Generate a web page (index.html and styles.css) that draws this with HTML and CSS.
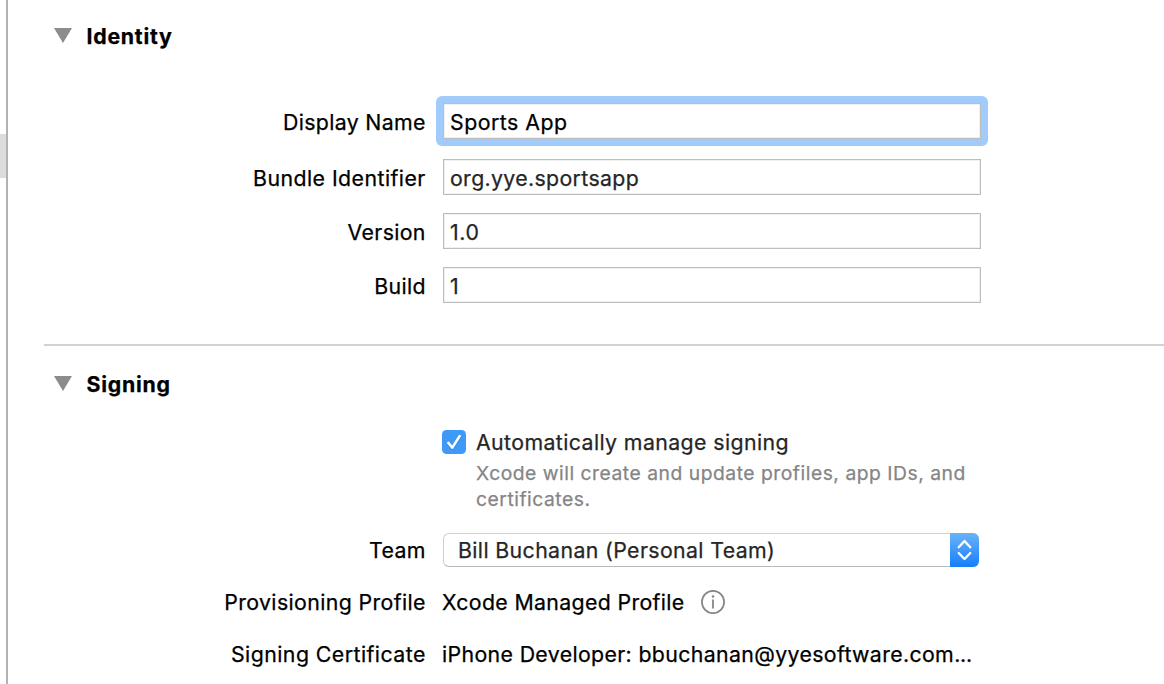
FILE: index.html
```html
<!DOCTYPE html>
<html lang="en">
<head>
<meta charset="utf-8">
<title>Target Settings</title>
<link rel="stylesheet" href="styles.css">
</head>
<body>
<div class="window">
  <aside class="rail"><div class="rail-selection"></div></aside>
  <main class="editor">
    <section class="section identity">
      <h2 class="heading"><svg class="disclosure" width="18" height="15" viewBox="0 0 18 15"><path d="M0 0H18L9 15Z" fill="#8c8c8c"/></svg><span>Identity</span></h2>
      <div class="fields">
        <div class="row first"><span class="label">Display Name</span><div class="focus-ring"><div class="field focused"><span class="v-name">Sports App</span></div></div></div>
        <div class="row"><span class="label l-wide">Bundle Identifier</span><div class="field"><span class="v-bundle">org.yye.sportsapp</span></div></div>
        <div class="row"><span class="label">Version</span><div class="field"><span class="v-version">1.0</span></div></div>
        <div class="row"><span class="label">Build</span><div class="field"><span class="v-version">1</span></div></div>
      </div>
    </section>
    <section class="section signing">
      <h2 class="heading"><svg class="disclosure" width="18" height="15" viewBox="0 0 18 15"><path d="M0 0H18L9 15Z" fill="#8c8c8c"/></svg><span>Signing</span></h2>
      <div class="auto">
        <svg class="checkbox" width="24" height="24" viewBox="0 0 24 24">
          <rect width="24" height="24" rx="4.5" fill="#3f99f7"/>
          <path d="M6.5 14L10.5 18.8L18 6.8" fill="none" stroke="#2274cf" stroke-opacity=".6" stroke-width="2.4" stroke-linecap="round" stroke-linejoin="round"/>
          <path d="M6.3 12.9L10.4 17.7L17.7 6" fill="none" stroke="#fff" stroke-width="2.5" stroke-linecap="round" stroke-linejoin="round"/>
        </svg>
        <div class="auto-copy">
          <div class="auto-title">Automatically manage signing</div>
          <div class="hint">Xcode will create and update profiles, app IDs, and<br>certificates.</div>
        </div>
      </div>
      <div class="details">
        <div class="row"><span class="label">Team</span>
          <div class="popup"><span class="v-team">Bill Buchanan (Personal Team)</span>
            <span class="stepper"><svg width="29" height="34" viewBox="0 0 29 34"><path d="M8.7 14.2L14.5 8L20.3 14.2M8.7 20L14.5 26L20.3 20" fill="none" stroke="#fff" stroke-width="2.3" stroke-linecap="round" stroke-linejoin="round"/></svg></span>
          </div>
        </div>
        <div class="row"><span class="label l-profile">Provisioning Profile</span><div class="value"><span class="v-profile">Xcode Managed Profile</span>
          <svg class="info" width="24" height="24" viewBox="0 0 24 24"><circle cx="12" cy="12" r="11.1" fill="none" stroke="#858585" stroke-width="1.7"/><path d="M12 9.5V18.5" stroke="#858585" stroke-width="1.8"/><circle cx="12" cy="6.6" r="1.25" fill="#858585"/></svg></div></div>
        <div class="row"><span class="label l-wide">Signing Certificate</span><div class="value"><span class="v-cert">iPhone Developer: bbuchanan@yyesoftware.com<span class="dots">...</span></span></div></div>
      </div>
    </section>
  </main>
</div>
</body>
</html>
```
FILE: styles.css
```css
* { box-sizing: border-box; }
body {
  margin: 0;
  background: #fff;
  color: #000;
  font: 400 21.3px/28px Inter, "Liberation Sans", sans-serif;
  letter-spacing: .3px;
  -webkit-text-stroke: .25px currentColor;
  white-space: nowrap;
}
.window { display: flex; width: 1164px; height: 684px; overflow: hidden; }
.rail { width: 8px; padding-top: 134px; border-right: 2px solid #b2b2b2; }
.rail-selection { height: 44px; background: #dcdcdc; }
.editor { flex: 1; padding-left: 36px; }
.heading {
  display: flex;
  align-items: center;
  gap: 14.5px;
  height: 28px;
  margin: 0;
  padding-left: 10px;
  font-size: 21.3px;
  font-weight: 700;
  letter-spacing: .75px;
}
.disclosure { position: relative; top: -1px; }
.identity { height: 344px; padding-top: 22px; }
.fields { display: grid; gap: 18px; padding-top: 53px; }
.row { display: grid; grid-template-columns: 381px 538px; column-gap: 18px; align-items: center; }
.first { margin-bottom: 2px; }
.label { justify-self: end; margin-right: -.8px; padding-top: 2px; letter-spacing: .34px; }
.l-profile { letter-spacing: .38px; }
.l-wide { letter-spacing: .45px; }
.field {
  height: 36px;
  padding: 4px 6px 0;
  border: 1px solid #bdbdbd;
  box-shadow: inset 0 0 0 1px #f0f0f0;
  background: #fff;
  color: #262626;
}
.focus-ring { margin: -7px; padding: 7px; border-radius: 6px; background: #a1cbfa; }
.focused { color: #000; }
.v-name { letter-spacing: .5px; }
.v-bundle { letter-spacing: .35px; }
.v-version { letter-spacing: .6px; }
.signing { border-top: 2px solid #d2d2d2; padding-top: 24px; }
.auto { display: flex; gap: 10px; padding: 32px 0 0 398px; }
.checkbox { flex: none; }
.auto-title { height: 30px; line-height: 24px; color: #262626; letter-spacing: .4px; }
.hint { font-size: 19.3px; line-height: 26px; color: #858585; letter-spacing: .52px; }
.details { display: grid; grid-auto-rows: 52px; padding-top: 11px; }
.popup {
  display: flex;
  justify-content: space-between;
  width: 536px;
  height: 34px;
  margin-top: 2px;
  padding-left: 14px;
  border: 1px solid #d0d0d0;
  border-bottom-color: #b9b9b9;
  border-right: 0;
  border-radius: 6px;
  color: #262626;
  line-height: 32px;
}
.v-team { letter-spacing: .38px; }
.stepper {
  width: 29px;
  height: 34px;
  margin-top: -1px;
  border-radius: 0 6px 6px 0;
  background: linear-gradient(#6ab3fa, #157efb);
}
.stepper svg { display: block; }
.value { display: flex; align-items: center; gap: 16px; margin-left: -1px; padding-top: 1px; }
.v-profile { letter-spacing: .35px; }
.v-cert { letter-spacing: .36px; }
.dots { letter-spacing: -.2px; }
```
